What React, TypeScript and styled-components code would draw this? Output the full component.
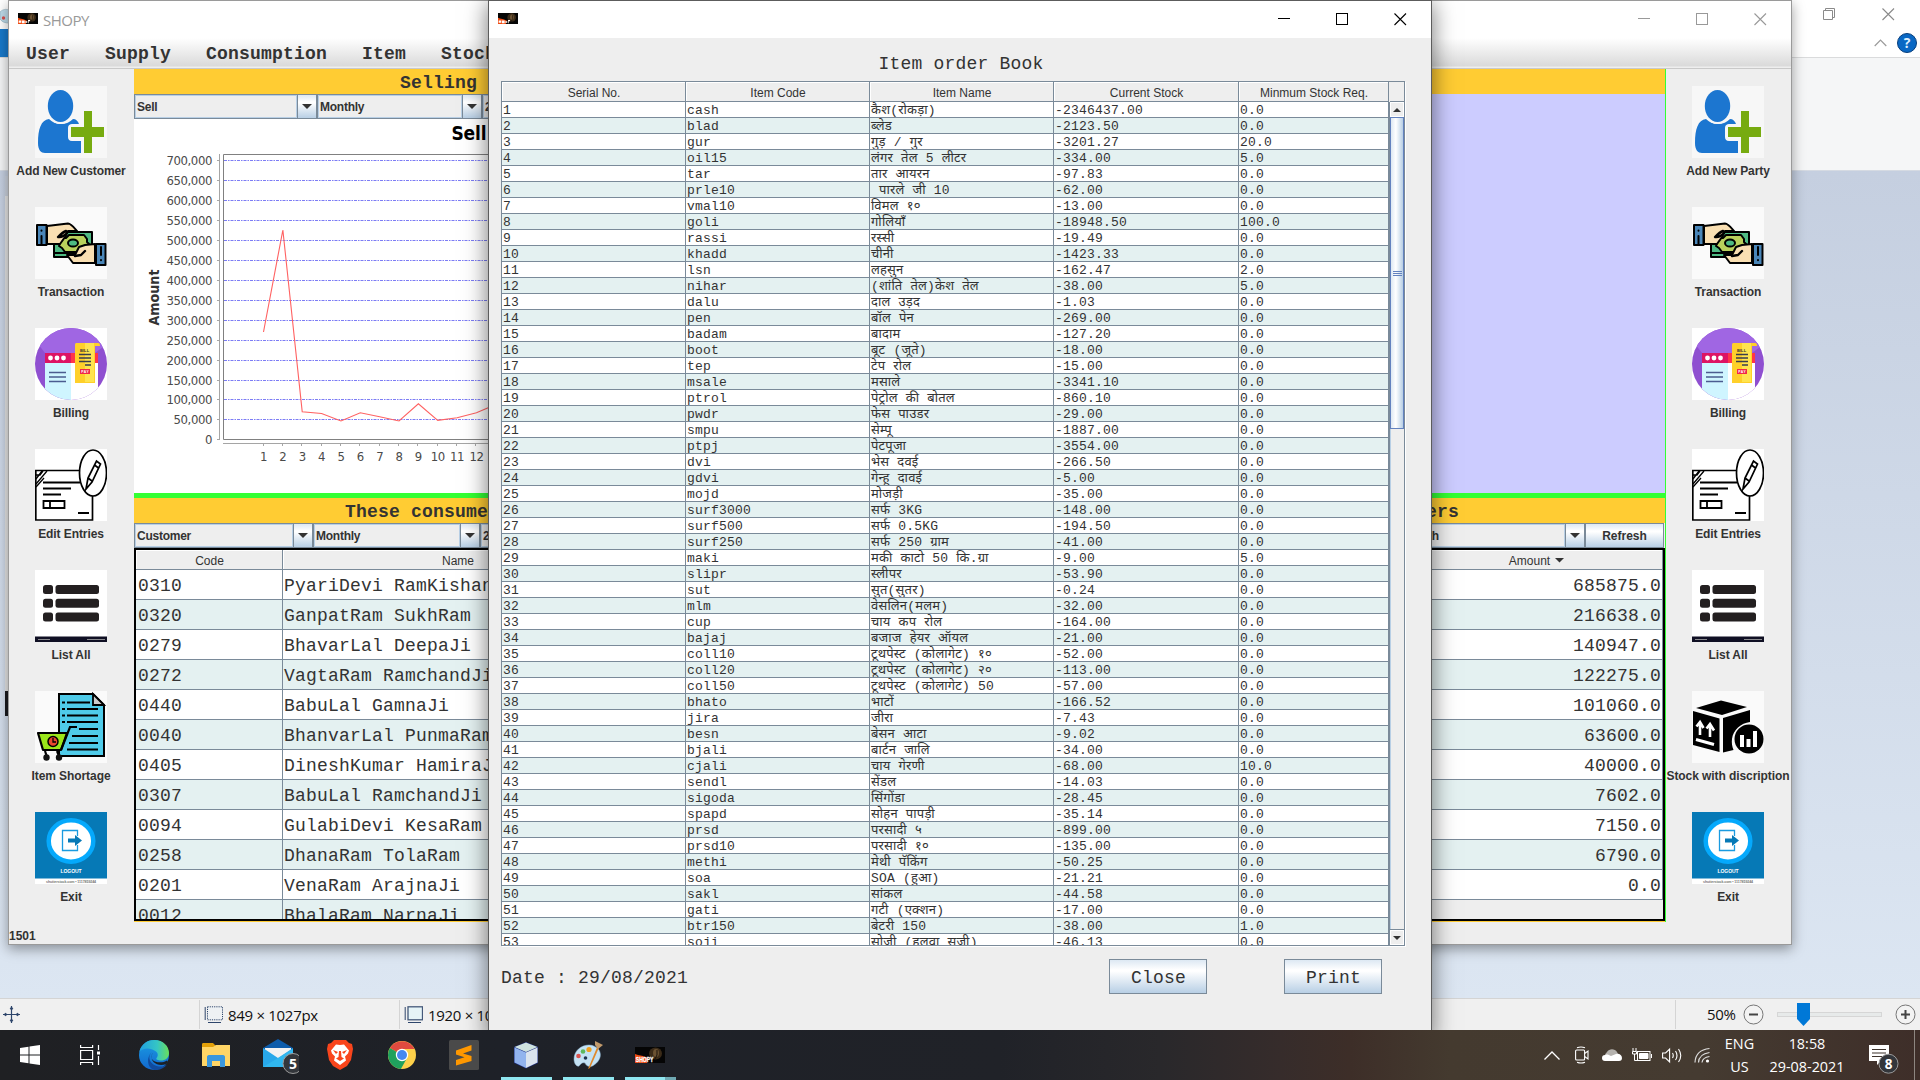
import React from "react";
import styled, { createGlobalStyle, css } from "styled-components";

const MONO = `"Courier New", "Liberation Mono", "Noto Sans Devanagari", "Lohit Devanagari", "Noto Sans", monospace`;
const ARIAL = `"Liberation Sans", Arial, sans-serif`;
const SEGOE = `"Open Sans", "Noto Sans", sans-serif`;
const TAHOMA = `"DejaVu Sans Condensed", "DejaVu Sans", sans-serif`;
const LINE = "#7a8a99";
const INK = "#333333";
const METAL = "linear-gradient(180deg, #dde8f3 0%, #ffffff 30%, #ffffff 34%, #b8cfe5 100%)";

const Global = createGlobalStyle`
  * { box-sizing: border-box; }
  html, body { margin: 0; padding: 0; background: #dbe5f1; overflow: hidden; }
  svg { display: block; flex: none; }
`;

const Desktop = styled.div`
  position: relative;
  width: 1920px;
  height: 1080px;
  overflow: hidden;
  display: flex;
  flex-direction: column;
  color: ${INK};
`;

/* ---------- background image editor ---------- */
const Editor = styled.div`
  flex: 1;
  display: flex;
  flex-direction: column;
  background: #fff;
`;
const EditorTitle = styled.div`
  height: 29px;
  display: flex;
  justify-content: space-between;
  align-items: center;
  padding: 0 25px 0 0;
`;
const EditorButtons = styled.div`
  display: flex;
  gap: 46px;
`;
const EditorTabs = styled.div`
  height: 29px;
  display: flex;
  align-items: center;
  justify-content: space-between;
  border-bottom: 1px solid #dadbdc;
  padding-right: 3px;
`;
const FileTab = styled.div`
  width: 60px;
  height: 28px;
  background: #1979ca;
`;
const TabTools = styled.div`
  display: flex;
  align-items: center;
  gap: 10px;
`;
const Ribbon = styled.div`
  height: 113px;
  background: #f5f6f7;
  border-bottom: 1px solid #d5dae2;
`;
const Canvas = styled.div`
  flex: 1;
  background: linear-gradient(180deg, #c5cfe0, #dce6f2);
  padding: 5px 0 0 5px;
`;
const Picture = styled.div`
  width: 4px;
  height: 540px;
  background: linear-gradient(180deg, #ccd3de 0 20px, #e6e6e6 20px 515px, #1b1b1f 515px);
`;
const StatusBar = styled.div`
  height: 32px;
  background: #f0f0f0;
  border-top: 1px solid #d4d4d4;
  display: flex;
  font: 15px ${SEGOE};
  letter-spacing: -0.3px;
  color: #111;
`;
const StatusCell = styled.div<{ $w?: number; $pad?: number }>`
  ${(p) => (p.$w ? `width: ${p.$w}px;` : "flex: 1;")}
  margin: 1px 0;
  padding-left: ${(p) => p.$pad ?? 4}px;
  border-right: 1px solid #d4d4d4;
  display: flex;
  align-items: center;
  gap: 5px;
  white-space: nowrap;
`;
const Zoom = styled.div`
  width: 244px;
  display: flex;
  align-items: center;
  padding: 0 0 1px 31px;
  gap: 8px;
`;
const Percent = styled.span`
  width: 28px;
  white-space: nowrap;
`;
const SliderTrack = styled.div`
  width: 105px;
  height: 5px;
  margin: 0 5px 0 5px;
  background: #e7eaea;
  border: 1px solid #d6d6d6;
  display: flex;
  align-items: center;
  padding-left: 19px;
`;

/* ---------- windows ---------- */
const Window = styled.section<{ $x: number; $w: number; $h: number; $edge: string; $shadow: string }>`
  position: absolute;
  top: 0;
  left: ${(p) => p.$x}px;
  width: ${(p) => p.$w}px;
  height: ${(p) => p.$h}px;
  border: 1px solid ${(p) => p.$edge};
  box-shadow: ${(p) => p.$shadow};
  background: #eeeeee;
  display: flex;
  flex-direction: column;
  > * { flex: none; }
`;
const TitleBar = styled.div`
  height: 37px;
  background: #fff;
  display: flex;
  align-items: center;
  padding: 0 24px 2px 9px;
  font: 15px ${SEGOE};
  letter-spacing: -0.5px;
  color: #999;
`;
const TitleText = styled.span`
  flex: 1;
  padding: 2px 0 0 5px;
`;
const WinButtons = styled.div`
  display: flex;
  gap: 46px;
  padding-top: 2px;
`;
const MenuBar = styled.div`
  height: 31px;
  background: linear-gradient(180deg, #ffffff, #dadada 28px, #eeeeee 29px, #eeeeee 30px, #c9c9c9 30px);
  display: flex;
  align-items: center;
  gap: 35px;
  padding-left: 17px;
  font: bold 18px ${MONO};
  letter-spacing: 0.2px;
`;
const Body = styled.div`
  height: 853px;
  display: flex;
`;
const Sidebar = styled.nav`
  width: 125px;
  padding: 17px 1px 0 0;
  display: flex;
  flex-direction: column;
`;
const SideItem = styled.div`
  flex: none;
  height: 121px;
  display: flex;
  flex-direction: column;
  align-items: center;
  font: bold 12px/16px ${ARIAL};
  letter-spacing: -0.08px;
  white-space: nowrap;
  gap: 5px;
`;
const Main = styled.main`
  width: 1532px;
  border-right: 1px solid #33ff33;
  display: flex;
  flex-direction: column;
`;
const Banner = styled.div<{ $left: number; $right?: number }>`
  height: 25px;
  background: #ffcc33;
  display: flex;
  justify-content: space-between;
  padding: 4px ${(p) => p.$right ?? 0}px 0 ${(p) => p.$left}px;
  font: bold 18px/21px ${MONO};
  letter-spacing: 0.2px;
`;
const Upper = styled.div`
  height: 399px;
  display: flex;
`;
const ChartPane = styled.div`
  width: 765px;
  background: #fff;
`;
const Lavender = styled.div`
  flex: 1;
  background: #ccccff;
`;
const GreenRule = styled.div`
  height: 5px;
  background: #33ff33;
`;
const ComboRow = styled.div<{ $end?: boolean }>`
  height: 25px;
  display: flex;
  justify-content: ${(p) => (p.$end ? "flex-end" : "flex-start")};
`;
const ComboBox = styled.div<{ $w: number }>`
  width: ${(p) => p.$w}px;
  border: 1px solid ${LINE};
  display: flex;
  font: bold 12px ${ARIAL};
  letter-spacing: -0.25px;
`;
const ComboText = styled.div`
  flex: 1;
  border: 1px solid #b8cfe5;
  background: #eee;
  display: flex;
  align-items: center;
  padding-left: 1px;
`;
const ComboArrow = styled.div`
  width: 19px;
  border-left: 1px solid ${LINE};
  background: ${METAL};
  display: flex;
  align-items: center;
  justify-content: center;
`;
const Refresh = styled.button`
  width: 79px;
  height: 25px;
  margin: 0 1px 0 0;
  padding: 0;
  border: 1px solid ${LINE};
  background: ${METAL};
  font: bold 12px ${ARIAL};
  color: ${INK};
`;
const Halves = styled.div`
  display: grid;
  grid-template-columns: 766px 765px;
`;
const Tables = styled.div`
  height: 373px;
  border: 2px solid #000;
  display: grid;
  grid-template-columns: 764px 763px;
  overflow: hidden;
`;
const GoldRule = styled.div`
  height: 1px;
  background: #ffcc33;
`;
const Grid = styled.div`
  overflow: hidden;
`;
const HeadRow = styled.div<{ $cols: string; $h: number }>`
  display: grid;
  grid-template-columns: ${(p) => p.$cols};
  height: ${(p) => p.$h}px;
  font: 12px ${ARIAL};
`;
const HeadCell = styled.div`
  display: flex;
  align-items: center;
  justify-content: center;
  gap: 5px;
  padding: 2px 0 0 1px;
  border-right: 1px solid ${LINE};
  border-bottom: 1px solid ${LINE};
  box-shadow: inset 1px 1px 0 #fff;
  white-space: nowrap;
`;
const Cell = styled.div<{ $right?: boolean }>`
  padding: 0 1px;
  border-right: 1px solid ${LINE};
  border-bottom: 1px solid ${LINE};
  overflow: hidden;
  white-space: pre;
  text-align: ${(p) => (p.$right ? "right" : "left")};
`;
const Row = styled.div<{ $cols: string; $tint: boolean; $big?: boolean }>`
  display: grid;
  grid-template-columns: ${(p) => p.$cols};
  background: ${(p) => (p.$tint ? "#e4f1f1" : "#ffffff")};
  ${(p) =>
    p.$big
      ? css`
          height: 30px;
          font: 18px/33px ${MONO};
          ${Cell}:first-child { padding-left: 2px; }
        `
      : css`
          height: 16px;
          font: 13px/17px ${MONO};
        `}
  letter-spacing: 0.2px;
`;
const Footnote = styled.div`
  padding: 7px 0 0 0;
  font: bold 12px/15px ${ARIAL};
`;

/* ---------- order book dialog ---------- */
const DialogTitle = styled.div`
  height: 43px;
  padding: 10px 0 0 2px;
  text-align: center;
  font: 18px/33px ${MONO};
  letter-spacing: 0.2px;
`;
const ScrollPane = styled.div`
  width: 904px;
  height: 865px;
  margin-left: 12px;
  border: 1px solid ${LINE};
  box-shadow: 1px 1px 0 #fff;
  display: flex;
  overflow: hidden;
`;
const OrderGrid = styled.div`
  width: 887px;
  height: 863px;
  overflow: hidden;
`;
const ScrollSide = styled.div`
  flex: 1;
  display: flex;
  flex-direction: column;
`;
const Corner = styled.div`
  height: 20px;
`;
const ScrollBar = styled.div`
  flex: 1;
  border-left: 1px solid ${LINE};
  display: flex;
  flex-direction: column;
  justify-content: space-between;
  box-shadow: inset 1px 1px 0 #b8cfe5;
`;
const ScrollTop = styled.div`
  display: flex;
  flex-direction: column;
`;
const ScrollButton = styled.div`
  height: 15px;
  display: flex;
  align-items: center;
  justify-content: center;
  background: #eee;
  border: 1px solid #fff;
  box-shadow: 0 -1px 0 ${LINE};
`;
const Thumb = styled.div`
  height: 312px;
  border: 1px solid #6382bf;
  background: linear-gradient(90deg, #dde8f3, #ffffff 40%, #b8cfe5);
  display: flex;
  flex-direction: column;
  align-items: center;
  justify-content: center;
  gap: 1px;
`;
const Grip = styled.i`
  width: 9px;
  height: 1px;
  background: #6382bf;
`;
const DialogFoot = styled.div`
  display: flex;
  padding: 13px 49px 0 12px;
  font: 18px ${MONO};
  letter-spacing: 0.2px;
`;
const DateText = styled.span`
  flex: 1;
  padding-top: 9px;
  white-space: pre;
`;
const MetalButton = styled.button`
  width: 98px;
  height: 35px;
  margin-left: 77px;
  padding: 3px 0 0 1px;
  border: 1px solid ${LINE};
  background: ${METAL};
  font: 18px ${MONO};
  letter-spacing: 0.2px;
  color: ${INK};
`;

/* ---------- taskbar ---------- */
const Taskbar = styled.footer`
  position: relative;
  z-index: 5;
  height: 50px;
  display: flex;
  background: linear-gradient(90deg, #1f2023 0, #1e2128 500px, #202228 1000px, #29282b 1160px, #362c2b 1280px, #3d2e28 1350px, #443a2f 1450px, #453b31 1700px, #3e2e29 1920px);
  color: #fff;
`;
const TaskItem = styled.div<{ $w: number; $open?: boolean; $stack?: boolean }>`
  width: ${(p) => p.$w}px;
  display: flex;
  align-items: center;
  justify-content: center;
  ${(p) =>
    p.$open &&
    css`
      background: linear-gradient(90deg, #8fe6f0 0 ${p.$stack ? 40 : 51}px, #6fa9b3 ${p.$stack ? 40 : 51}px) 6px 47px / 51px 3px no-repeat;
    `}
`;
const Spacer = styled.div<{ $w?: number }>`
  ${(p) => (p.$w ? `width: ${p.$w}px;` : "flex: 1;")}
`;
const TrayText = styled.div<{ $w: number }>`
  width: ${(p) => p.$w}px;
  text-align: center;
  font: 14.4px/23px ${SEGOE};
  letter-spacing: 0;
  padding-top: 2px;
  white-space: nowrap;
`;
const PeekLine = styled.div`
  width: 6px;
  border-left: 1px solid #8d8680;
`;

/* ---------- drawings ---------- */
const ShopLogo = ({ w, h, label }: { w: number; h: number; label?: boolean }) => (
  <svg width={w} height={h} viewBox="0 0 30 16" preserveAspectRatio="none">
    <rect width="30" height="16" fill="#050505" />
    <ellipse cx="20.5" cy="6.5" rx="6.5" ry="6" fill="#3b2b18" />
    <ellipse cx="21" cy="6" rx="3" ry="4" fill="#6b5232" />
    <path d="M22 3v5l-2 4" stroke="#1c130a" fill="none" />
    <path d="M0 7l3 1 5 1 5 2-1 5H0z" fill="#f04a10" />
    {label ? (
      <text x="0.8" y="15" fontSize="7" fontWeight="900" fontFamily="Liberation Sans" fill="#fff" stroke="#fff" strokeWidth=".3" textLength="17.5" lengthAdjust="spacingAndGlyphs">SHOPY</text>
    ) : (
      <path d="M1 11h4v3H1zM6 11h4v4H6zM11 12h3v2h-3zM15 10h3v2h-2v3h-1z" fill="#fff" />
    )}
  </svg>
);

const Minimize = ({ c }: { c: string }) => (
  <svg width="12" height="13" viewBox="0 0 12 13"><path d="M0 5.5h12" stroke={c} /></svg>
);
const Maximize = ({ c }: { c: string }) => (
  <svg width="12" height="13" viewBox="0 0 12 13"><rect x=".5" y=".5" width="11" height="11" stroke={c} fill="none" /></svg>
);
const CloseX = ({ c }: { c: string }) => (
  <svg width="13" height="13" viewBox="0 0 13 13"><path d="M.5.5l11.5 11.5M12 .5L.5 12" stroke={c} strokeWidth="1.1" /></svg>
);
const Arrow = ({ up, s = 10 }: { up?: boolean; s?: number }) => (
  <svg width={s} height={s / 2} viewBox="0 0 10 5" preserveAspectRatio="none">
    <path d={up ? "M5 0l5 5H0z" : "M0 0h10L5 5z"} fill="#333" />
  </svg>
);

const AddPerson = () => (
  <svg width="72" height="72" viewBox="0 0 72 72">
    <rect width="72" height="72" fill="#f7f7f7" />
    <path d="M14 33C6 34 3 43 3 57c0 7 3 10 7 10h36V55h-9c-3 0-4-2-4-4v-9c0-3 2-4 4-4h7c-1-3-3-5-6-5-3 3-7 5-12 5s-9-2-12-5z" fill="#1c76d0" />
    <ellipse cx="25.5" cy="20" rx="14.5" ry="18" fill="#f7f7f7" />
    <ellipse cx="25.5" cy="20" rx="12.7" ry="16" fill="#1c76d0" />
    <path d="M49 25h8v16h12v10H57v16h-8V51H36V41h13z" fill="#77ab10" />
  </svg>
);

const Handshake = () => (
  <svg width="72" height="72" viewBox="0 0 72 72">
    <rect width="72" height="72" fill="#fafafa" />
    <g stroke="#000" strokeWidth="2" strokeLinejoin="round" strokeLinecap="round">
      <rect x="19" y="25" width="38" height="25" fill="#4eba83" />
      <path d="M19 46h24" fill="none" />
      <path d="M27 31h4l3-3h15l3 4v3l2 2v4l-6 4H30l-3-4-3-2z" fill="#b9d15c" />
      <ellipse cx="38" cy="36" rx="5" ry="3.6" fill="#4eba83" />
      <path d="M12 19l21-2.500c3 0 6 4 9 7.500h-9l-3 6-5 7H12z" fill="#f9dfb2" />
      <path d="M31 24c-3 1-6 4-8 6 4 1 7-2 9-4" fill="#f9dfb2" strokeWidth="2.400" />
      <path d="M60 56H38l-6-8h8l4-8 6-2 10-1z" fill="#f9dfb2" />
      <path d="M40 49l6-1 4-4" fill="none" strokeWidth="2.400" />
      <rect x="2" y="18" width="9.500" height="20" fill="#4a86b8" />
      <rect x="61" y="37" width="9.500" height="21" fill="#4a86b8" />
      <path d="M6.500 29v8M6.500 23.500v.2M66 40v8M66 53v.2" fill="none" />
    </g>
  </svg>
);

const Billing = () => (
  <svg width="72" height="72" viewBox="0 0 72 72">
    <clipPath id="billClip"><circle cx="36" cy="36" r="36" /></clipPath>
    <rect width="72" height="72" fill="#fff" />
    <g clipPath="url(#billClip)">
      <rect width="72" height="72" fill="#8f4fd0" />
      <path d="M0 12L10 25h50l12-9V0H0z" fill="#a066e3" />
      <rect x="10" y="25" width="27" height="10" fill="#dd1464" />
      <rect x="36" y="25" width="27" height="10" fill="#ff3548" />
      <rect x="10" y="35" width="26" height="40" fill="#cff5ff" />
      <rect x="36" y="35" width="27" height="40" fill="#fff" />
    </g>
    <path d="M40 17c0-2 1-2 2-2h21c2 0 2 2 2 3h-5v37H40z" fill="#ffd02a" />
    <path d="M50 15h9v39h-9z" fill="#ffe44f" />
    <g fill="#fff"><circle cx="15.500" cy="30" r="2.400" /><circle cx="22" cy="30" r="2.400" /><circle cx="28.500" cy="30" r="2.400" /></g>
    <path d="M14 44.500h17M14 49h17M14 53.500h17" stroke="#4b5c90" strokeWidth="1.700" />
    <path d="M44 26.500h12M44 30h12M44 33.500h12M50 37h6" stroke="#3a3d4d" strokeWidth="1.300" />
    <text x="45" y="23.500" fontSize="4" fontWeight="bold" fontFamily="Liberation Sans" fill="#333" textLength="9">BILL</text>
    <rect x="45" y="41" width="10" height="5" fill="#f0284a" />
    <text x="46.200" y="45" fontSize="3.400" fontWeight="bold" fontFamily="Liberation Sans" fill="#fff" textLength="7.500">PAY</text>
  </svg>
);

const EditEntries = () => (
  <svg width="72" height="72" viewBox="0 0 72 72">
    <rect width="72" height="72" fill="#fff" />
    <g fill="none" stroke="#000" strokeWidth="1.700">
      <path d="M.8 71V21.500h56.700V71z" />
      <path d="M0 26h5l3-4M1 35L12 22M1 30l6-8M1 38l8-9" strokeWidth="1.300" />
      <ellipse cx="58" cy="24" rx="13.500" ry="23" fill="#fff" />
      <path d="M51 40l2-11L61.500 12l4 3L57 33zM53 29l4 3M59.500 16l4 3" />
      <path d="M8 33.500h37M8 39.500h28M8 45.500h18M43 64h11" strokeWidth="1.900" />
      <path d="M8.500 52h21v7h-21zM15 52v7" strokeWidth="1.800" />
    </g>
  </svg>
);

const ListAll = () => (
  <svg width="72" height="72" viewBox="0 0 72 72">
    <rect width="72" height="72" fill="#fff" />
    {[15, 28.800, 42.600].map((y) => (
      <g key={y} fill="#231f20">
        <rect x="8" y={y} width="10" height="9" rx="2.500" />
        <rect x="20.500" y={y} width="43.500" height="9" rx="2.500" />
      </g>
    ))}
    <rect y="66.500" width="72" height="5.500" fill="#101024" />
    <path d="M3 69.500h12M52 69.500h18" stroke="#aaa" strokeWidth=".8" />
  </svg>
);

const Shortage = () => (
  <svg width="72" height="72" viewBox="0 0 72 72">
    <rect width="72" height="72" fill="#fafafa" />
    <path d="M24 3h34l11 11v51H24z" fill="#4fcbe9" stroke="#000" strokeWidth="2" />
    <path d="M58 3v11h11z" fill="#ccc" stroke="#000" strokeWidth="1.800" />
    <path d="M32 11.500h23M32 18h31M32 24.500h31M32 31h31M44 38h19M37 45h26M34 52h29M32 58.500h31" stroke="#000" strokeWidth="2" />
    <path d="M27 11.500h3M27 18h3M27 24.500h3M27 31h3" stroke="#000" strokeWidth="2" />
    <path d="M3 42h29l-6 17H8z" fill="#9be51a" stroke="#000" strokeWidth="2.200" strokeLinejoin="round" />
    <path d="M26 59l9-23h7M10 60l2 6M22 60l2 5" fill="none" stroke="#000" strokeWidth="2.200" />
    <circle cx="18" cy="50.500" r="5" fill="#e8472f" stroke="#000" strokeWidth="1.500" />
    <path d="M18 47v4h3" fill="none" stroke="#000" strokeWidth="1.300" />
    <circle cx="11.500" cy="66.500" r="3.200" fill="#111" /><circle cx="24" cy="66.500" r="3.200" fill="#111" />
  </svg>
);

const StockBox = () => (
  <svg width="72" height="72" viewBox="0 0 72 72">
    <rect width="72" height="72" fill="#fafafa" />
    <path d="M4 17L29 9.500 55 16 30 24zM1 20l26.500 7.500V61L1 54zM31 27l27-8v12c-9 1-17 8-18 17-.5 4 0 7 1.500 11L31 61.500z" fill="#000" />
    <circle cx="57" cy="48" r="14.500" fill="#000" />
    <path d="M48 44h4v12h-4zM54.500 48h4v8h-4zM61 40h4v16h-4z" fill="#fff" />
    <path d="M8 44V32M4.500 35.500L8 31l3.500 6M18 46V34M14.500 37.500L18 33l4 6.500" stroke="#fff" strokeWidth="2.600" fill="none" />
    <path d="M4 48.500l18 5" stroke="#fff" strokeWidth="3" />
  </svg>
);

const Logout = () => (
  <svg width="72" height="72" viewBox="0 0 72 72">
    <rect width="72" height="72" fill="#fff" />
    <rect width="72" height="66.500" fill="#0679b6" />
    <ellipse cx="36" cy="29" rx="22.300" ry="20.700" fill="#fff" stroke="#05a9fc" strokeWidth="4.500" />
    <path d="M42.500 24v-5.500H27.500v20h15V33" fill="none" stroke="#1a9be0" strokeWidth="1.300" />
    <path d="M33 26.500h7V23l7 5.500-7 5.500v-3.500h-7z" fill="#0679b6" />
    <text x="25.500" y="60.800" fontSize="5" fontWeight="bold" fontFamily="Liberation Sans" fill="#fff" textLength="21">LOGOUT</text>
    <text x="11" y="70.700" fontSize="3.600" fontFamily="Liberation Sans" fill="#777" textLength="50">shutterstock.com • 1117859244</text>
  </svg>
);

/* ---------- chart ---------- */
const POINTS: number[] = [332, 230, 411.700, 413.500, 421, 412.800, 416.700, 421, 403.800, 420.300, 417.700, 412.700, 404.500];
const stepX = 19.36;
const px = (i: number) => 263.500 + i * stepX;
const SalesChart = () => (
  <svg width="765" height="374" viewBox="134 119 765 374" fontFamily={TAHOMA}>
    <text x="451.500" y="139.500" fontSize="19" fontWeight="bold" fill="#000" letterSpacing="-0.2">Sell</text>
    <text transform="translate(159 325.500) rotate(-90)" fontSize="14" fontWeight="bold" fill="#333" textLength="56" lengthAdjust="spacingAndGlyphs">Amount</text>
    {Array.from({ length: 15 }, (_, i) => {
      const y = Math.round(439.300 - i * 19.930);
      const label = i === 0 ? "0" : (i * 50000).toLocaleString("en-US");
      return (
        <g key={i}>
          {i > 0 && <path d={`M224 ${y + 0.5}h700`} stroke="#7d7df5" strokeDasharray="3 1 1.500 1" />}
          <path d={`M217 ${y + 0.5}h3`} stroke="#a5a5a5" />
          <text x="212" y={y + 5} fontSize="13" fill="#4a4a4a" textAnchor="end" letterSpacing="-0.4">{label}</text>
        </g>
      );
    })}
    <path d="M219.500 154v286M223 443.500h700" stroke="#a5a5a5" />
    <path d="M900 154.500H223.500v285H900" fill="none" stroke="#808080" />
    {Array.from({ length: 12 }, (_, i) => (
      <g key={i}>
        <path d={`M${Math.round(px(i)) - 0.5} 443v3`} stroke="#a5a5a5" />
        <text x={px(i)} y="461" fontSize="13" fill="#4a4a4a" textAnchor="middle" letterSpacing="-0.4">{i + 1}</text>
      </g>
    ))}
    <polyline points={POINTS.map((y, i) => `${px(i)},${y}`).join(" ")} fill="none" stroke="#ff6262" strokeWidth="1.100" />
  </svg>
);

const Combo = ({ w, text }: { w: number; text: string }) => (
  <ComboBox $w={w}>
    <ComboText>{text}</ComboText>
    <ComboArrow><Arrow /></ComboArrow>
  </ComboBox>
);

/* ---------- data ---------- */
const CUSTOMERS: [string, string][] = [
  ["0310", "PyariDevi RamKishan"], ["0320", "GanpatRam SukhRam"], ["0279", "BhavarLal DeepaJi"],
  ["0272", "VagtaRam RamchandJi"], ["0440", "BabuLal GamnaJi"], ["0040", "BhanvarLal PunmaRam"],
  ["0405", "DineshKumar HamiraJi"], ["0307", "BabuLal RamchandJi"], ["0094", "GulabiDevi KesaRam"],
  ["0258", "DhanaRam TolaRam"], ["0201", "VenaRam ArajnaJi"], ["0012", "BhalaRam NarnaJi"],
];
const AMOUNTS = ["685875.0", "216638.0", "140947.0", "122275.0", "101060.0", "63600.0", "40000.0", "7602.0", "7150.0", "6790.0", "0.0"];

const ITEMS: [string, string, string, string?][] = [
  ["cash", "कैश(रोकड़ा)", "-2346437.00"], ["blad", "ब्लेड", "-2123.50"], ["gur", "गुड़ / गुर", "-3201.27", "20.0"],
  ["oil15", "लंगर तेल 5 लीटर", "-334.00", "5.0"], ["tar", "तार आयरन", "-97.83"], ["prle10", " पारले जी 10", "-62.00"],
  ["vmal10", "विमल १०", "-13.00"], ["goli", "गोलियाँ", "-18948.50", "100.0"], ["rassi", "रस्सी", "-19.49"],
  ["khadd", "चीनी", "-1423.33"], ["lsn", "लहसुन", "-162.47", "2.0"], ["nihar", "(शांति तेल)केश तेल", "-38.00", "5.0"],
  ["dalu", "दाल उड़द", "-1.03"], ["pen", "बॉल पेन", "-269.00"], ["badam", "बादाम", "-127.20"],
  ["boot", "बूट (जूते)", "-18.00"], ["tep", "टेप रोल", "-15.00"], ["msale", "मसाले", "-3341.10"],
  ["ptrol", "पेट्रोल की बोतल", "-860.10"], ["pwdr", "फेस पाउडर", "-29.00"], ["smpu", "सेम्पू", "-1887.00"],
  ["ptpj", "पेटपूजा", "-3554.00"], ["dvi", "भेस दवई", "-266.50"], ["gdvi", "गेन्हू दावई", "-5.00"],
  ["mojd", "मोजड़ी", "-35.00"], ["surf3000", "सर्फ 3KG", "-148.00"], ["surf500", "सर्फ 0.5KG", "-194.50"],
  ["surf250", "सर्फ 250 ग्राम", "-41.00"], ["maki", "मकी काटो 50 कि.ग्रा", "-9.00", "5.0"], ["slipr", "स्लीपर", "-53.90"],
  ["sut", "सुत(सुतर)", "-0.24"], ["mlm", "वेसलिन(मलम)", "-32.00"], ["cup", "चाय कप रोल", "-164.00"],
  ["bajaj", "बजाज हेयर ऑयल", "-21.00"], ["coll10", "टूथपेस्ट (कोलागेट) १०", "-52.00"], ["coll20", "टूथपेस्ट (कोलागेट) २०", "-113.00"],
  ["coll50", "टूथपेस्ट (कोलागेट) 50", "-57.00"], ["bhato", "भाटों", "-166.52"], ["jira", "जीरा", "-7.43"],
  ["besn", "बेसन आटा", "-9.02"], ["bjali", "बार्टन जालि", "-34.00"], ["cjali", "चाय गेरणी", "-68.00", "10.0"],
  ["sendl", "सेंडल", "-14.03"], ["sigoda", "सिंगोंडा", "-28.45"], ["spapd", "सोहन पापड़ी", "-35.14"],
  ["prsd", "परसादी ५", "-899.00"], ["prsd10", "परसादी १०", "-135.00"], ["methi", "मेथी पॅकिंग", "-50.25"],
  ["soa", "SOA (हुआ)", "-21.21"], ["sakl", "सांकल", "-44.58"], ["gati", "गटी (एक्शन)", "-17.00"],
  ["btr150", "बेटरी 150", "-38.00", "1.0"], ["soji", "सोजी (हलवा सूजी)", "-46.13"],
];

const LEFT_NAV: [string, React.FC][] = [
  ["Add New Customer", AddPerson], ["Transaction", Handshake], ["Billing", Billing], ["Edit Entries", EditEntries],
  ["List All", ListAll], ["Item Shortage", Shortage], ["Exit", Logout],
];
const RIGHT_NAV: [string, React.FC][] = [
  ["Add New Party", AddPerson], ["Transaction", Handshake], ["Billing", Billing], ["Edit Entries", EditEntries],
  ["List All", ListAll], ["Stock with discription", StockBox], ["Exit", Logout],
];
const SideNav = ({ items }: { items: [string, React.FC][] }) => (
  <Sidebar>
    {items.map(([label, Icon]) => (
      <SideItem key={label}><Icon />{label}</SideItem>
    ))}
  </Sidebar>
);

const CUSTOMER_COLS = "147px 350px 1fr";
const AMOUNT_COLS = "1fr 253px";
const ORDER_COLS = "184px 184px 184px 185px 150px";

const PaintEditor = () => (
  <Editor>
    <EditorTitle>
      <svg width="20" height="22" viewBox="0 0 20 22"><path d="M0 8c3-3 6-3 9-2v13c-4 0-7-1-9-4z" fill="#bfdcea" stroke="#8ab" strokeWidth=".6" /><circle cx="3.500" cy="14" r="1.700" fill="#d9534f" /></svg>
      <EditorButtons>
        <svg width="13" height="13" viewBox="0 0 13 13" fill="none" stroke="#8a8a8a"><path d="M.5 2.500h9v9h-9zM2.500 2.500V.5h9v9h-2" /></svg>
        <CloseX c="#8a8a8a" />
      </EditorButtons>
    </EditorTitle>
    <EditorTabs>
      <FileTab />
      <TabTools>
        <svg width="13" height="8" viewBox="0 0 13 8"><path d="M.7 7L6.500 1.200 12.300 7" fill="none" stroke="#9a9a9a" strokeWidth="1.200" /></svg>
        <svg width="20" height="20" viewBox="0 0 20 20">
          <circle cx="10" cy="10" r="9.500" fill="#0a68c4" stroke="#073e7c" />
          <text x="10" y="15" textAnchor="middle" fontSize="14" fontWeight="bold" fontFamily="Open Sans" fill="#dff0ff">?</text>
        </svg>
      </TabTools>
    </EditorTabs>
    <Ribbon />
    <Canvas><Picture /></Canvas>
    <StatusBar>
      <StatusCell $w={200} $pad={3}>
        <svg width="17" height="17" viewBox="0 0 17 17" stroke="#2d456b" fill="#2d456b"><path d="M0 8.500h17M8.500 0v17" strokeWidth="1.200" /><path d="M1 8.500l2-1.500v3zM16 8.500l-2-1.500v3zM8.500 1L7 3h3zM8.500 16L7 14h3z" strokeWidth=".8" /></svg>
      </StatusCell>
      <StatusCell $w={200}>
        <svg width="19" height="18" viewBox="0 0 19 18" fill="none" stroke="#2d456b"><rect x="3.500" y=".8" width="15" height="13" strokeDasharray="1.200 1" fill="#eef1f4" /><path d="M1.200 1v13M4 16.500h13" /></svg>
        849 × 1027px
      </StatusCell>
      <StatusCell>
        <svg width="19" height="18" viewBox="0 0 19 18" fill="none" stroke="#45597a"><rect x="4" y=".8" width="14.500" height="13" fill="#e6f4f7" strokeWidth="1.300" /><path d="M1.200 1v13M4 16.500h13" stroke="#2d456b" /></svg>
        1920 × 10
      </StatusCell>
      <Zoom>
        <Percent>50%</Percent>
        <svg width="21" height="21" viewBox="0 0 21 21"><circle cx="10.500" cy="10.500" r="9.500" fill="#f3f3f3" stroke="#777" /><path d="M6 10.500h9" stroke="#444" strokeWidth="2" /></svg>
        <SliderTrack>
          <svg width="13" height="23" viewBox="0 0 13 23"><path d="M0 0h13v16l-6.500 7L0 16z" fill="#0078d7" /></svg>
        </SliderTrack>
        <svg width="21" height="21" viewBox="0 0 21 21"><circle cx="10.500" cy="10.500" r="9.500" fill="#f3f3f3" stroke="#777" /><path d="M6 10.500h9M10.500 6v9" stroke="#444" strokeWidth="2" /></svg>
      </Zoom>
    </StatusBar>
  </Editor>
);

const ShopWindow = () => (
  <Window $x={8} $w={1784} $h={945} $edge="#9a9a9a" $shadow="0 4px 12px rgba(0,0,0,.38)">
    <TitleBar>
      <ShopLogo w={20} h={11} />
      <TitleText>SHOPY</TitleText>
      <WinButtons><Minimize c="#999" /><Maximize c="#999" /><CloseX c="#999" /></WinButtons>
    </TitleBar>
    <MenuBar>
      <span>User</span><span>Supply</span><span>Consumption</span><span>Item</span><span>Stock</span>
    </MenuBar>
    <Body>
      <SideNav items={LEFT_NAV} />
      <Main>
        <Banner $left={266}>Selling</Banner>
        <Upper>
          <ChartPane>
            <ComboRow>
              <Combo w={183} text="Sell" /><Combo w={165} text="Monthly" /><Combo w={165} text="2" />
            </ComboRow>
            <SalesChart />
          </ChartPane>
          <Lavender />
        </Upper>
        <GreenRule />
        <Banner $left={211} $right={206}><span>These consume</span><span>ers</span></Banner>
        <Halves>
          <ComboRow>
            <Combo w={179} text="Customer" /><Combo w={167} text="Monthly" /><Combo w={165} text="2" />
          </ComboRow>
          <ComboRow $end>
            <Combo w={184} text="Month" /><Refresh>Refresh</Refresh>
          </ComboRow>
        </Halves>
        <Tables>
          <Grid>
            <HeadRow $cols={CUSTOMER_COLS} $h={20}><HeadCell>Code</HeadCell><HeadCell>Name</HeadCell><HeadCell /></HeadRow>
            {CUSTOMERS.map(([code, name], i) => (
              <Row key={code} $cols={CUSTOMER_COLS} $tint={i % 2 === 1} $big><Cell>{code}</Cell><Cell>{name}</Cell><Cell /></Row>
            ))}
          </Grid>
          <Grid>
            <HeadRow $cols={AMOUNT_COLS} $h={20}><HeadCell /><HeadCell>Amount <Arrow s={9} /></HeadCell></HeadRow>
            {AMOUNTS.map((a, i) => (
              <Row key={a} $cols={AMOUNT_COLS} $tint={i % 2 === 1} $big><Cell /><Cell $right>{a}</Cell></Row>
            ))}
          </Grid>
        </Tables>
        <GoldRule />
      </Main>
      <SideNav items={RIGHT_NAV} />
    </Body>
    <Footnote>1501</Footnote>
  </Window>
);

const OrderBook = () => (
  <Window $x={488} $w={944} $h={1040} $edge="#5c5c5c" $shadow="0 3px 22px rgba(0,0,0,.55)">
    <TitleBar>
      <ShopLogo w={20} h={11} />
      <TitleText />
      <WinButtons><Minimize c="#000" /><Maximize c="#000" /><CloseX c="#000" /></WinButtons>
    </TitleBar>
    <DialogTitle>Item order Book</DialogTitle>
    <ScrollPane>
      <OrderGrid>
        <HeadRow $cols={ORDER_COLS} $h={20}>
          {["Serial No.", "Item Code", "Item Name", "Current Stock", "Minmum Stock Req."].map((h) => <HeadCell key={h}>{h}</HeadCell>)}
        </HeadRow>
        {ITEMS.map(([code, name, stock, min], i) => (
          <Row key={code} $cols={ORDER_COLS} $tint={i % 2 === 1}>
            <Cell>{i + 1}</Cell><Cell>{code}</Cell><Cell>{name}</Cell><Cell>{stock}</Cell><Cell>{min ?? "0.0"}</Cell>
          </Row>
        ))}
      </OrderGrid>
      <ScrollSide>
        <Corner />
        <ScrollBar>
          <ScrollTop>
            <ScrollButton><Arrow up s={8} /></ScrollButton>
            <Thumb><Grip /><Grip /><Grip /></Thumb>
          </ScrollTop>
          <ScrollButton><Arrow s={8} /></ScrollButton>
        </ScrollBar>
      </ScrollSide>
    </ScrollPane>
    <DialogFoot>
      <DateText>Date : 29/08/2021</DateText>
      <MetalButton>Close</MetalButton>
      <MetalButton>Print</MetalButton>
    </DialogFoot>
  </Window>
);

const Tasks = () => (
  <Taskbar>
    <TaskItem $w={60}>
      <svg width="20" height="20" viewBox="0 0 20 20" fill="#fff"><path d="M0 3l8.500-1.300v7.800H0zM9.500 1.500L20 0v9.500H9.500zM0 10.500h8.500v7.800L0 17zM9.500 10.500H20V20L9.500 18.500z" /></svg>
    </TaskItem>
    <TaskItem $w={60}>
      <svg width="20" height="20" viewBox="0 0 20 20" fill="none" stroke="#fff" strokeWidth="1.200"><path d="M.6 5.500h12v9H.6zM.6 0v2.500h12V0M.6 20v-2.500h12V20M18.500 0v5M18.500 11v9" /><path d="M17 6.500h3v3h-3z" fill="#fff" stroke="none" /></svg>
    </TaskItem>
    <Spacer $w={3} />
    <TaskItem $w={62}>
      <svg width="30" height="30" viewBox="0 0 30 30">
        <defs>
          <linearGradient id="edgeTop" x1="0" x2="1"><stop offset="0" stopColor="#1f9fe0" /><stop offset=".6" stopColor="#35c5c5" /><stop offset="1" stopColor="#6ae05a" /></linearGradient>
          <linearGradient id="edgeSide" x1="0" x2="0" y1="0" y2="1"><stop offset="0" stopColor="#1b9de2" /><stop offset="1" stopColor="#1268cf" /></linearGradient>
        </defs>
        <circle cx="15" cy="15" r="15" fill="url(#edgeSide)" />
        <path d="M.3 12C2 4.500 8 0 15.500 0 24 0 30 6 30 13c0 5-4 7.500-8 7.500-3 0-5.500-1-4.500-2.500 2-2 1.500-5-.5-6.500C11 7 3.500 8 .3 12z" fill="url(#edgeTop)" />
        <path d="M13 12c-5 4-3 13 7 14.500 3 .4 6-.5 8-2-3 4-8 6-13 5.500C8 28 7 17 13 12z" fill="#114a9c" />
        <path d="M14 13c-3 2-2 7 2 8.500 4 1.500 9 1 12-1l.8 1-1.500 2.500c-8 3-16-1.500-14.800-9z" fill="#1c2027" />
      </svg>
    </TaskItem>
    <TaskItem $w={62}>
      <svg width="28" height="24" viewBox="0 0 28 24"><path d="M0 1.500C0 .5.500 0 1.500 0H11l3 3H28v18H0z" fill="#e3a008" /><path d="M0 4h11l3-2h14v21H0z" fill="#ffd566" /><path d="M5 24V14c0-1 .6-2 2-2h14c1.400 0 2 1 2 2v10h-5v-6h-8v6z" fill="#3a97dd" /></svg>
    </TaskItem>
    <TaskItem $w={62}>
      <svg width="42" height="38" viewBox="0 0 42 38">
        <path d="M6 12L21 3l15 9v4H6z" fill="#0d5cab" /><path d="M8 12h26v12H8z" fill="#f2f2f2" />
        <path d="M6 12l15 10 15-10v19H6z" fill="#28a8ea" /><path d="M6 31l15-9 15-9v18z" fill="#35c1f1" opacity=".6" />
        <circle cx="36" cy="27.500" r="10" fill="#33363b" stroke="#9a9a9a" />
        <text x="36" y="32.500" fontSize="14" fontWeight="bold" fontFamily="Open Sans" fill="#fff" textAnchor="middle">5</text>
      </svg>
    </TaskItem>
    <TaskItem $w={62}>
      <svg width="26" height="30" viewBox="0 0 26 30">
        <path d="M7 0h12l3 3 3 1 1 5-2 11-4 6-7 4-7-4-4-6L0 9l1-5 3-1z" fill="#f9451c" />
        <path d="M13 5l4-.5 5 6-1 3-3 3 1 4-6 4.500-6-4.500 1-4-3-3-1-3 5-6z" fill="#fff" />
        <path d="M6 10l5 2-2 2zM20 10l-5 2 2 2zM12 11h2l.5 6 2.500 1.500-4 2.500-4-2.500 2.500-1.500z" fill="#f9451c" />
      </svg>
    </TaskItem>
    <TaskItem $w={62}>
      <svg width="28" height="28" viewBox="0 0 28 28">
        <circle cx="14" cy="14" r="14" fill="#fdd04a" />
        <path d="M14 14L1.900 7A14 14 0 0 1 26.500 8H14z" fill="#e04a3f" />
        <path d="M14 14L1.900 7a14 14 0 0 0 11 21L19 17z" fill="#1fa15d" />
        <circle cx="14" cy="14" r="6.200" fill="#fff" /><circle cx="14" cy="14" r="5" fill="#4688f1" />
      </svg>
    </TaskItem>
    <TaskItem $w={62}>
      <svg width="30" height="30" viewBox="0 0 30 30"><rect width="30" height="30" rx="1.500" fill="#4a4a4a" /><path d="M7 10.500L22.500 5v5.500L14 13.500l8.500 2.500v5L7 25.500V20l8.500-2.700L7 14.500z" fill="#ff9800" /></svg>
    </TaskItem>
    <TaskItem $w={62} $open>
      <svg width="28" height="28" viewBox="0 0 28 28"><path d="M14 1l12 5v16l-12 5.500L2 22V6z" fill="#1b2c80" /><path d="M14 1.500L25.500 6 14 11 2.500 6z" fill="#cfe3df" /><path d="M2.500 6.500L14 11.500V27L2.500 21.500z" fill="#92b4ee" /><path d="M25.500 6.500L14 11.500V27l11.500-5.500z" fill="#dbe4ee" /></svg>
    </TaskItem>
    <TaskItem $w={62} $open>
      <svg width="30" height="30" viewBox="0 0 30 30">
        <path d="M16 5C8 5 1 11 1 19c0 5 3 8 5 7 2-2 3-4 6-3 1 3 5 5 9 2 6-4 8-10 5-15-2-3-6-5-10-5z" fill="#c4e2f4" stroke="#8fb7d4" strokeWidth=".5" />
        <circle cx="5.500" cy="16" r="2.300" fill="#d9534f" /><circle cx="10" cy="11.500" r="2.300" fill="#5cb85c" /><circle cx="16" cy="9.500" r="2.600" fill="#f0a020" /><circle cx="12.500" cy="18" r="1.800" fill="#1e3550" />
        <path d="M25 5l1.500 1.500L17 28l-2 1z" fill="#e08a2c" /><path d="M22 1l8 4-5 4-3-4z" fill="#c29a6b" />
      </svg>
    </TaskItem>
    <TaskItem $w={62} $open $stack><ShopLogo w={30} h={16} label /></TaskItem>
    <Spacer />
    <TaskItem $w={31}>
      <svg width="16" height="9" viewBox="0 0 16 9"><path d="M.5 8.500L8 1l7.500 7.500" fill="none" stroke="#fff" strokeWidth="1.300" /></svg>
    </TaskItem>
    <TaskItem $w={30}>
      <svg width="14" height="18" viewBox="0 0 14 18" fill="none" stroke="#fff" strokeWidth="1.100"><rect x=".6" y="4" width="9" height="10" rx="1" /><path d="M9.600 7.500L13 5v8l-3.400-2.500M2 1.800Q6 .2 10 1.800M2 16.200q4 1.600 8 0" /></svg>
    </TaskItem>
    <TaskItem $w={30}>
      <svg width="20" height="14" viewBox="0 0 20 14"><path d="M5 12a5 5 0 0 1 0-8 6 6 0 0 1 10 0l3 6z" fill="#b5b2ae" /><path d="M3 13a3 3 0 0 1 0-6c2-1 4 0 6 1l5-2c3-1 6 1 6 4 0 2-1 3-3 3z" fill="#fff" /></svg>
    </TaskItem>
    <TaskItem $w={30}>
      <svg width="20" height="14" viewBox="0 0 20 14" fill="none" stroke="#fff"><rect x="5.500" y="3.500" width="12.500" height="9" /><path d="M7.500 5.500h8.500v5H7.500z" fill="#fff" /><path d="M19.500 6v4M1 0v3M4 0v3M.5 3.500h4v2.500h-4zM2.500 6v6.500h2.500" /></svg>
    </TaskItem>
    <TaskItem $w={30}>
      <svg width="20" height="17" viewBox="0 0 20 17" fill="none" stroke="#fff" strokeWidth="1.100"><path d="M.6 6h3l4-4v13l-4-4h-3zM10.500 6q1.500 2.500 0 5M13.500 4q3 4.500 0 9M16.500 2q4.500 6.500 0 13" /></svg>
    </TaskItem>
    <TaskItem $w={30}>
      <svg width="16" height="17" viewBox="0 0 16 17" fill="none" stroke="#ddd" strokeWidth="1.200"><path d="M1 15.500Q1.500 3 15.500 1.500M4.500 15.500q.5-8.500 11-10M8 15.500q.5-5 7.500-6" /><circle cx="13.500" cy="14" r="1.600" fill="#fff" stroke="none" /></svg>
    </TaskItem>
    <TrayText $w={45}>ENG<br />US</TrayText>
    <TrayText $w={90}>18:58<br />29-08-2021</TrayText>
    <TaskItem $w={62}>
      <svg width="31" height="38" viewBox="0 -6 31 38">
        <path d="M1 3h20v16h-8l-4 4v-4H1z" fill="#fff" /><path d="M4 7.500h14M4 11h14M4 14.500h10" stroke="#3d332c" strokeWidth="1.200" />
        <circle cx="20.500" cy="21.700" r="9.500" fill="#33363b" stroke="#9a9a9a" />
        <text x="20.500" y="26.600" fontSize="13.500" fontWeight="bold" fontFamily="Open Sans" fill="#fff" textAnchor="middle">8</text>
      </svg>
    </TaskItem>
    <PeekLine />
  </Taskbar>
);

export default function App() {
  return (
    <Desktop>
      <Global />
      <PaintEditor />
      <ShopWindow />
      <OrderBook />
      <Tasks />
    </Desktop>
  );
}
